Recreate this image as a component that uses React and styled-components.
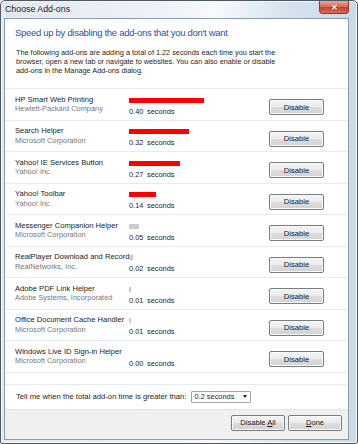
import React from 'react';
import styled, { createGlobalStyle } from 'styled-components';

const GlobalStyle = createGlobalStyle`
    html, body {
        margin: 0;
        padding: 0;
        background: #ffffff;
    }
    body {
        font-family: "Liberation Sans", Arial, sans-serif;
    }
`;

const addOns = [
    { name: 'HP Smart Web Printing', company: 'Hewlett-Packard Company', time: 0.4 },
    { name: 'Search Helper', company: 'Microsoft Corporation', time: 0.32 },
    { name: 'Yahoo! IE Services Button', company: 'Yahoo! Inc.', time: 0.27 },
    { name: 'Yahoo! Toolbar', company: 'Yahoo! Inc.', time: 0.14 },
    { name: 'Messenger Companion Helper', company: 'Microsoft Corporation', time: 0.05 },
    { name: 'RealPlayer Download and Record', company: 'RealNetworks, Inc.', time: 0.02 },
    { name: 'Adobe PDF Link Helper', company: 'Adobe Systems, Incorporated', time: 0.01 },
    { name: 'Office Document Cache Handler', company: 'Microsoft Corporation', time: 0.01 },
    { name: 'Windows Live ID Sign-in Helper', company: 'Microsoft Corporation', time: 0 },
];

const Window = styled.div`
    width: 358px;
    height: 444px;
    box-sizing: border-box;
    border: 1px solid #4f5862;
    border-radius: 5px 5px 2px 2px;
    padding: 0 8px 3px 3px;
    display: flex;
    flex-direction: column;
    background: linear-gradient(90deg, #e4e9ef 0%, #eef2f6 45%, #f7f9fb 60%, #d6e3ee 80%, #c9d9e8 100%);
    box-shadow: inset 0 0 0 1px #f4f7fa;
`;

const TitleBar = styled.div`
    height: 17px;
    display: flex;
    align-items: flex-start;
    flex-shrink: 0;
`;

const Title = styled.span`
    font-size: 8.8px;
    line-height: 17px;
    color: #1b1b1b;
    padding-left: 1px;
`;

const CloseButton = styled.div`
    margin-left: auto;
    width: 30px;
    height: 13px;
    box-sizing: border-box;
    border: 1px solid #8a3a30;
    border-top: none;
    border-radius: 0 0 4px 4px;
    background: linear-gradient(180deg, #e8a898 0%, #d66e5c 45%, #c4422e 55%, #d6705a 100%);
    display: flex;
    align-items: center;
    justify-content: center;
    color: #ffffff;
    font-size: 8px;
    font-weight: bold;
    text-shadow: 0 0 1px #5a1a10;
`;

const Client = styled.div`
    flex: 1;
    display: flex;
    flex-direction: column;
    background: #ffffff;
    border: 1px solid #8d9aa8;
`;

const Heading = styled.div`
    padding: 7px 10px 0;
    font-size: 9.5px;
    letter-spacing: -0.3px;
    line-height: 14px;
    color: #2451b3;
`;

const Description = styled.p`
    width: 268px;
    margin: 7.5px 0 0;
    padding: 0 0 0 11px;
    font-size: 7.3px;
    line-height: 9px;
    color: #1e1e1e;
`;

const List = styled.div`
    margin-top: 13.5px;
    border-top: 1px solid #e6ebf1;
    border-bottom: 1px solid #e6ebf1;
    padding-bottom: 11px;
`;

const Row = styled.div`
    height: 31.5px;
    box-sizing: border-box;
    border-bottom: 1px solid #e6ebf1;
    display: grid;
    grid-template-columns: 114px 1fr 55px;
    padding: 5.5px 24px 0 10px;
`;

const Info = styled.div`
    display: flex;
    flex-direction: column;
`;

const Name = styled.span`
    font-size: 7.6px;
    line-height: 9.5px;
    color: #1a1a1a;
    white-space: nowrap;
`;

const Company = styled.span`
    font-size: 7.4px;
    line-height: 9.5px;
    color: #777777;
    white-space: nowrap;
`;

const Load = styled.div`
    display: flex;
    flex-direction: column;
    padding-top: 3px;
`;

const Bar = styled.div`
    height: 5px;
    background: ${({ slow }) => (slow ? '#ff0000' : '#cbcbcb')};
`;

const Seconds = styled.span`
    margin-top: 4px;
    font-size: 7.4px;
    line-height: 9px;
    color: #1e1e1e;
    word-spacing: 1.5px;
`;

const Button = styled.button`
    width: ${({ width }) => width || 55}px;
    height: 16px;
    margin-top: ${({ offset }) => offset || 0}px;
    padding: 0;
    box-sizing: border-box;
    border: 1px solid #777c82;
    border-radius: 2px;
    background: linear-gradient(180deg, #f4f4f4 0%, #ececec 48%, #dcdcdc 52%, #d2d2d2 100%);
    box-shadow: inset 0 0 0 1px #fbfbfb;
    font-family: "Liberation Sans", Arial, sans-serif;
    font-size: 7.6px;
    color: #1a1a1a;
    cursor: pointer;

    u {
        text-decoration: underline;
        text-underline-offset: 1px;
    }
`;

const Options = styled.div`
    height: 24px;
    display: flex;
    align-items: center;
    padding-left: 11px;
    gap: 4px;
`;

const OptionLabel = styled.span`
    font-size: 7.7px;
    color: #1e1e1e;
`;

const Select = styled.div`
    width: 60px;
    height: 12px;
    box-sizing: border-box;
    border: 1px solid #9da3aa;
    border-radius: 1px;
    display: flex;
    align-items: center;
    justify-content: space-between;
    padding: 0 3px 0 3px;
    font-size: 7.4px;
    color: #1e1e1e;
    background: #ffffff;
`;

const Arrow = styled.span`
    width: 0;
    height: 0;
    border-left: 2.5px solid transparent;
    border-right: 2.5px solid transparent;
    border-top: 3px solid #222;
`;

const Footer = styled.div`
    flex: 1;
    background: #f0f0f0;
    border-top: 1px solid #e0e0e0;
    display: flex;
    justify-content: flex-end;
    align-items: flex-start;
    gap: 3px;
    padding: 5px 6px 0 0;
`;

const App = () => (
    <>
        <GlobalStyle />
        <Window>
            <TitleBar>
                <Title>Choose Add-ons</Title>
                <CloseButton>✕</CloseButton>
            </TitleBar>
            <Client>
                <Heading>Speed up by disabling the add-ons that you don't want</Heading>
                <Description>
                    The following add-ons are adding a total of 1.22 seconds each time you start the
                    browser, open a new tab or navigate to websites. You can also enable or disable
                    add-ons in the Manage Add-ons dialog.
                </Description>
                <List>
                    {addOns.map((item) => (
                        <Row key={item.name}>
                            <Info>
                                <Name>{item.name}</Name>
                                <Company>{item.company}</Company>
                            </Info>
                            <Load>
                                <div>
                                    <Bar
                                        slow={item.time >= 0.1}
                                        style={{ width: `${Math.round(item.time * 188 * 2) / 2}px` }}
                                    />
                                </div>
                                <Seconds>{item.time.toFixed(2)} seconds</Seconds>
                            </Load>
                            <Button offset={4.5}>Disable</Button>
                        </Row>
                    ))}
                </List>
                <Options>
                    <OptionLabel>Tell me when the total add-on time is greater than:</OptionLabel>
                    <Select>
                        0.2 seconds
                        <Arrow />
                    </Select>
                </Options>
                <Footer>
                    <Button width={54}>
                        Disable <u>A</u>ll
                    </Button>
                    <Button width={54}>
                        <u>D</u>one
                    </Button>
                </Footer>
            </Client>
        </Window>
    </>
);

export default App;
